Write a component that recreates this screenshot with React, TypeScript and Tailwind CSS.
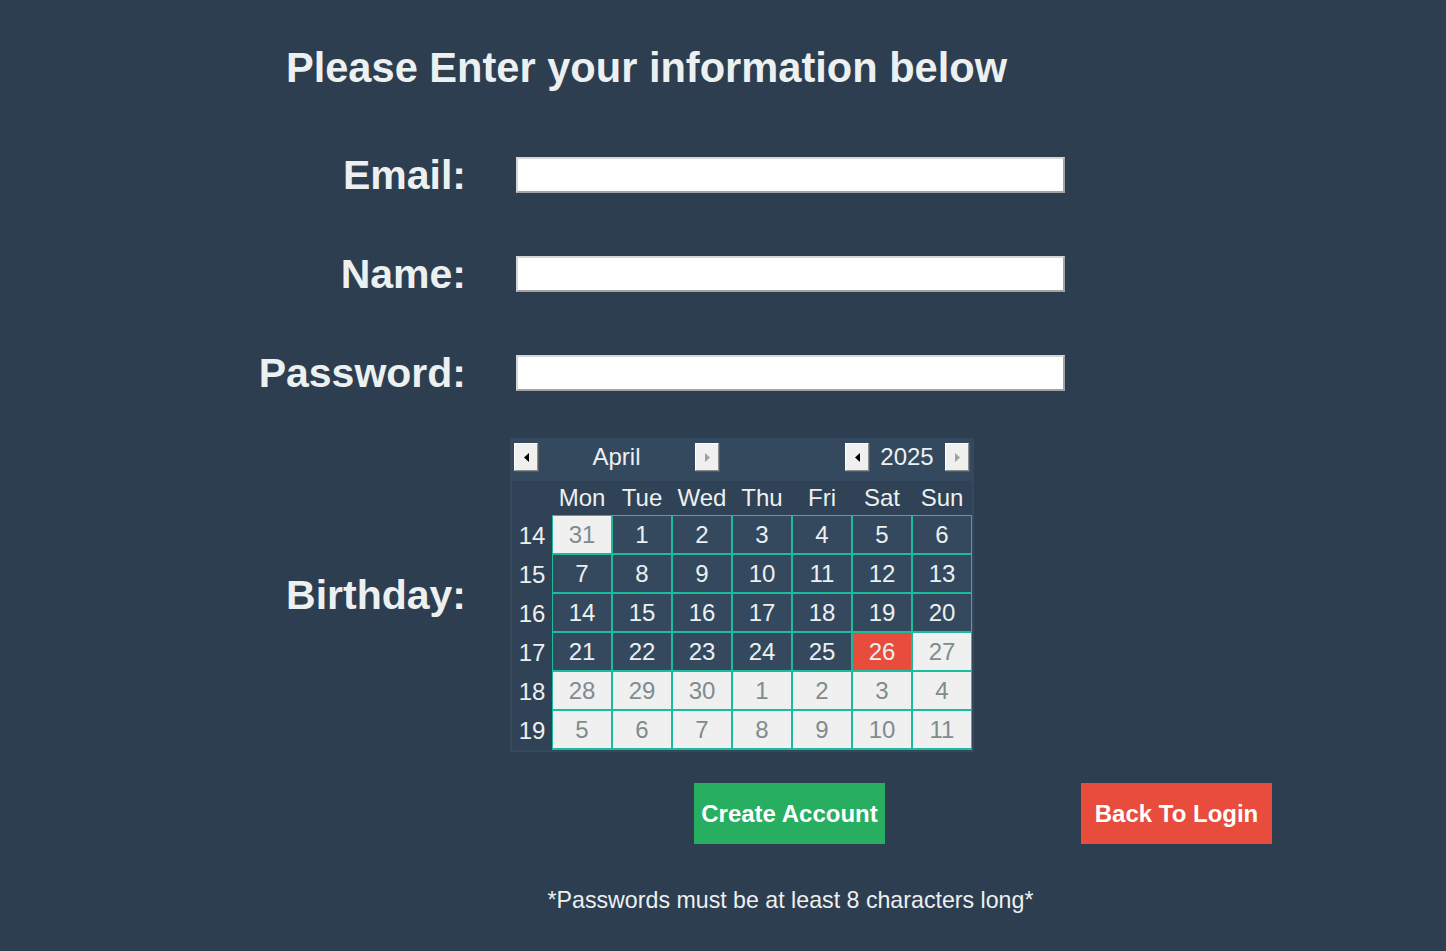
import React from "react";

const font = { fontFamily: '"Liberation Sans", Arial, sans-serif' };

type Day = { n: number; other?: boolean; sel?: boolean };

const weeks: { wk: number; days: Day[] }[] = [
  { wk: 14, days: [{ n: 31, other: true }, { n: 1 }, { n: 2 }, { n: 3 }, { n: 4 }, { n: 5 }, { n: 6 }] },
  { wk: 15, days: [7, 8, 9, 10, 11, 12, 13].map((n) => ({ n })) },
  { wk: 16, days: [14, 15, 16, 17, 18, 19, 20].map((n) => ({ n })) },
  { wk: 17, days: [{ n: 21 }, { n: 22 }, { n: 23 }, { n: 24 }, { n: 25 }, { n: 26, sel: true }, { n: 27, other: true }] },
  { wk: 18, days: [28, 29, 30, 1, 2, 3, 4].map((n) => ({ n, other: true })) },
  { wk: 19, days: [5, 6, 7, 8, 9, 10, 11].map((n) => ({ n, other: true })) },
];

const dayNames = ["Mon", "Tue", "Wed", "Thu", "Fri", "Sat", "Sun"];

const Arrow = ({ dir, dim }: { dir: "l" | "r"; dim?: boolean }) => (
  <div className="w-[24px] h-[28px] bg-[#f0f0f0] border border-t-white border-l-white border-b-[#8a8a8a] border-r-[#8a8a8a] flex items-center justify-center shadow-[1px_1px_0_#5a5a5a]">
    <svg width="5" height="9" viewBox="0 0 5 9">
      {dir === "l" ? (
        <polygon points="5,0 0,4.5 5,9" fill={dim ? "#a0a0a0" : "#000"} />
      ) : (
        <polygon points="0,0 5,4.5 0,9" fill={dim ? "#a0a0a0" : "#000"} />
      )}
    </svg>
  </div>
);

const Field = ({ label, mt }: { label: string; mt: string }) => (
  <div className={`flex items-center h-[36px] ${mt}`}>
    <div className="w-[466px] text-right text-[41px] font-bold text-[#ecf0f1] leading-none">{label}</div>
    <div className="ml-[50px] w-[549px] h-[36px] bg-white border-2 border-t-[#d6d6d6] border-l-[#d6d6d6] border-b-[#a3a3a3] border-r-[#a3a3a3]"></div>
  </div>
);

const Calendar = () => (
  <div className="w-[464px] bg-[#2f4256] border-2 border-[#34495e] text-[24px] leading-none text-[#ecf0f1]">
    <div className="flex items-start h-[41px] bg-[#34495e] pl-[2px] pt-[3px]">
      <Arrow dir="l" />
      <div className="w-[157px] h-[28px] flex items-center justify-center">April</div>
      <Arrow dir="r" dim />
      <div className="w-[126px]"></div>
      <Arrow dir="l" />
      <div className="w-[76px] h-[28px] flex items-center justify-center">2025</div>
      <Arrow dir="r" dim />
    </div>
    <div className="flex h-[34px] items-center pl-[40px]">
      {dayNames.map((d) => (
        <div key={d} className="w-[60px] text-center">{d}</div>
      ))}
    </div>
    <div className="flex">
      <div className="w-[40px] flex flex-col pt-px">
        {weeks.map((w) => (
          <div key={w.wk} className="h-[39px] flex items-center justify-center">{w.wk}</div>
        ))}
      </div>
      <div className="grid grid-cols-[repeat(7,58px)] auto-rows-[37px] gap-[2px] p-px bg-[#1abc9c]">
        {weeks.map((w) =>
          w.days.map((d, i) => (
            <div
              key={`${w.wk}-${i}`}
              className={`flex items-center justify-center ${
                d.sel
                  ? "bg-[#e74c3c] text-[#ecf0f1]"
                  : d.other
                  ? "bg-[#f0f0f0] text-[#7f8c8d]"
                  : "bg-[#34495e] text-[#ecf0f1]"
              }`}
            >
              {d.n}
            </div>
          ))
        )}
      </div>
    </div>
  </div>
);

export default function App() {
  return (
    <div className="w-full h-[951px] bg-[#2c3e50] overflow-hidden" style={font}>
      <div className="w-[1293px] h-[136px] flex items-center justify-center text-[41.6px] font-bold text-[#ecf0f1] leading-none">
        Please Enter your information below
      </div>

      <Field label="Email:" mt="mt-[21px]" />
      <Field label="Name:" mt="mt-[63px]" />
      <Field label="Password:" mt="mt-[63px]" />

      <div className="flex items-center mt-[47px]">
        <div className="w-[466px] text-right text-[41px] font-bold text-[#ecf0f1] leading-none">Birthday:</div>
        <div className="ml-[44px]">
          <Calendar />
        </div>
      </div>

      <div className="flex mt-[31px] pl-[694px]">
        <button className="w-[191px] h-[61px] bg-[#27ae60] text-white text-[24px] font-bold">Create Account</button>
        <button className="ml-[196px] w-[191px] h-[61px] bg-[#e74c3c] text-white text-[24px] font-bold">Back To Login</button>
      </div>

      <div className="ml-[516px] w-[549px] mt-[45px] text-center text-[23.2px] text-[#ecf0f1] leading-none">
        *Passwords must be at least 8 characters long*
      </div>
    </div>
  );
}
